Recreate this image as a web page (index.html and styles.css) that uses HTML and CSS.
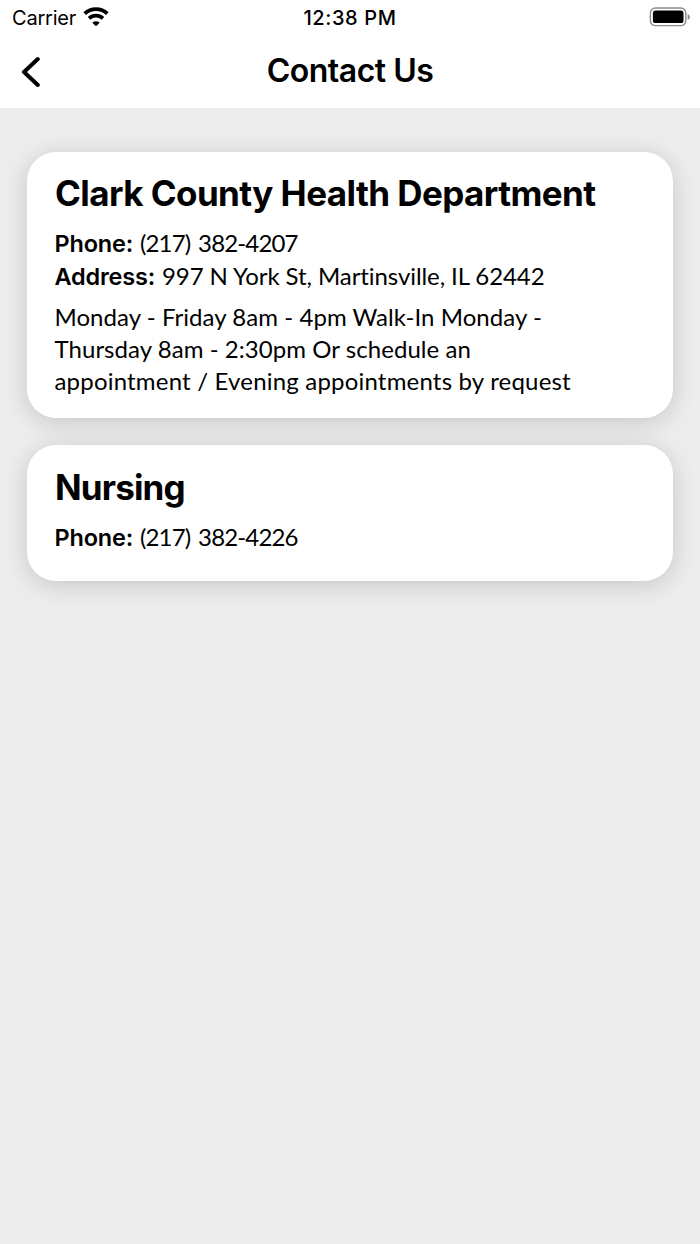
FILE: index.html
```html
<!DOCTYPE html>
<html lang="en">
<head>
  <meta charset="UTF-8">
  <meta name="viewport" content="width=device-width, initial-scale=1.0">
  <title>Contact Us</title>
  <link rel="stylesheet" href="styles.css">
</head>
<body>
  <!-- Header -->
  <header class="header">
    <div class="status-bar">
      <div class="carrier">
        <span>Carrier</span>
        <svg class="wifi" width="26" height="20" viewBox="0 0 26 20" fill="none" stroke="#000">
          <path d="M1.7 6.6 A16.3 16.3 0 0 1 24.3 6.6" stroke-width="3.7"/>
          <path d="M6 11.4 A10.2 10.2 0 0 1 20 11.4" stroke-width="3.6"/>
          <path d="M13 19.2 L9.3 15.8 A5.4 5.4 0 0 1 16.7 15.8 Z" fill="#000" stroke="none"/>
        </svg>
      </div>
      <span class="time">12:38 PM</span>
      <svg class="battery" width="42" height="20" viewBox="0 0 42 20">
        <rect x="1.4" y="1" width="35.4" height="17.6" rx="5" fill="none" stroke="#8c8c8c" stroke-width="1.4"/>
        <rect x="3.9" y="3.4" width="30.6" height="12.6" rx="2.6" fill="#000"/>
        <path d="M38.6 6.8 Q41 8 41 9.9 Q41 11.8 38.6 13 Z" fill="#8c8c8c"/>
      </svg>
    </div>
    <div class="navbar">
      <a href="#" class="back-btn" aria-label="Back">
        <svg width="20" height="32" viewBox="0 0 20 32" fill="none" stroke="#000" stroke-width="4" stroke-linecap="round" stroke-linejoin="round">
          <path d="M17.8 3 L4 16 L17.8 29"/>
        </svg>
      </a>
      <h1>Contact Us</h1>
    </div>
  </header>

  <!-- Contact cards -->
  <main class="contacts">
    <section class="card">
      <h2>Clark County Health Department</h2>
      <p class="phone"><strong>Phone:</strong><span>(217) 382-4207</span></p>
      <p class="address"><strong>Address:</strong><span>997 N York St, Martinsville, IL 62442</span></p>
      <p class="hours">Monday - Friday 8am - 4pm Walk-In Monday -<br>Thursday 8am - 2:30pm Or schedule an<br><span class="wide">appointment / Evening appointments by request</span></p>
    </section>

    <section class="card card-small">
      <h2 class="short">Nursing</h2>
      <p class="phone"><strong>Phone:</strong><span>(217) 382-4226</span></p>
    </section>
  </main>
</body>
</html>
```
FILE: styles.css
```css
html, body {
  margin: 0;
  padding: 0;
  height: 100%;
}

body {
  background-color: #ededed;
  color: #000;
  font-family: Inter, "Liberation Sans", sans-serif;
  overflow: hidden;
}

/* Header section */
.header {
  background-color: white;
  height: 108px;
}

.status-bar {
  display: grid;
  grid-template-columns: 1fr auto 1fr;
  align-items: center;
  height: 36px;
  padding: 0 9px 0 12px;
  font-size: 20px;
}

.carrier {
  display: flex;
  align-items: center;
  gap: 7px;
  letter-spacing: -0.2px;
}

.wifi {
  margin-bottom: 2px;
}

.time {
  margin-right: 3px;
  font-weight: 500;
  letter-spacing: 0.6px;
}

.battery {
  justify-self: end;
  margin-bottom: 2px;
}

.navbar {
  display: grid;
  grid-template-columns: 80px 1fr 80px;
  align-items: center;
  height: 70px;
}

.back-btn {
  display: flex;
  padding: 1px 0 0 20px;
}

.navbar h1 {
  margin: 0 0 2px;
  text-align: center;
  font-size: 32px;
  font-weight: 600;
  letter-spacing: -0.5px;
}

/* Cards */
.contacts {
  display: flex;
  flex-direction: column;
  gap: 27px;
  padding: 44px 27px 0;
}

.card {
  box-sizing: border-box;
  height: 266px;
  padding: 19px 28px 0;
  background-color: white;
  border-radius: 29px;
  box-shadow: 0 4px 24px rgba(0, 0, 0, 0.17);
  white-space: nowrap;
}

.card-small {
  height: 136px;
  padding-top: 20px;
}

.card h2 {
  margin: 0 0 12px;
  font-size: 35px;
  line-height: 44px;
  font-weight: 700;
  letter-spacing: -0.57px;
}

.card h2.short {
  letter-spacing: -0.85px;
}

.card p {
  margin: 0 0 0 -0.5px;
  font-family: Lato, "Liberation Sans", sans-serif;
  font-size: 24px;
  line-height: 32px;
  font-variant-ligatures: none;
}

.card strong {
  margin-right: 7px;
  font-family: Inter, "Liberation Sans", sans-serif;
  font-size: 23.5px;
  font-weight: 600;
  letter-spacing: -0.2px;
}

.phone span {
  letter-spacing: -0.85px;
  word-spacing: 2.5px;
}

.address span {
  letter-spacing: -0.08px;
}

.card .hours {
  margin: 8px 0 0 -0.5px;
  letter-spacing: 0.05px;
}

.hours .wide {
  letter-spacing: 0.19px;
}
```
